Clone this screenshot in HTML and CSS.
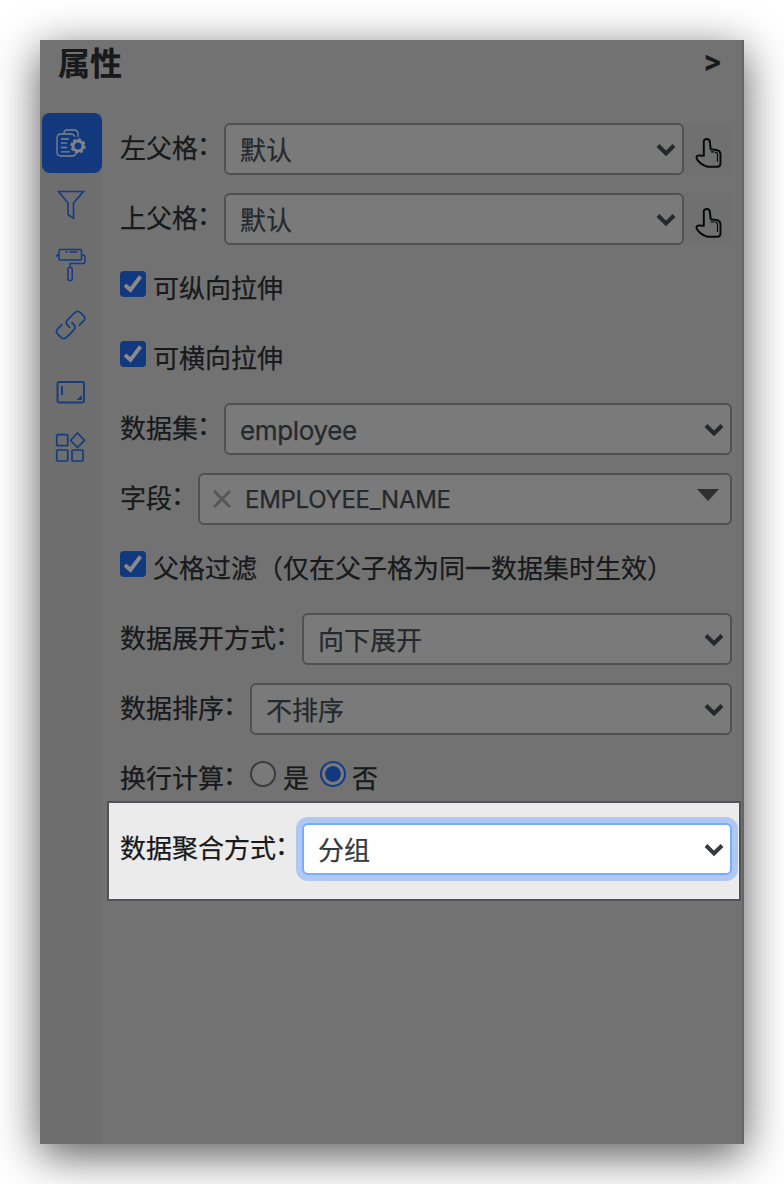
FILE: index.html
```
<!DOCTYPE html>
<html lang="zh-CN">
<head>
<meta charset="utf-8">
<title>属性</title>
<link rel="stylesheet" href="styles.css">
</head>
<body>
<svg class="defs" width="0" height="0">
  <symbol id="chevron" viewBox="0 0 20 14"><path d="M2 2.5l8 8 8-8" fill="none" stroke="currentColor" stroke-width="4"/></symbol>
  <symbol id="hand" viewBox="0 0 28 32"><g fill="none" stroke="currentColor" stroke-linejoin="round" stroke-linecap="round"><path stroke-width="2" d="M8.8 18V4.5C8.8 1 14.6 1 14.8 4.5L15.7 12.2L21.5 13C24 13.4 25.500 15 25.500 17.500V26C25.500 28.500 24.300 29.800 22.300 29.800H12.600C8 28.600 2.500 24.800 1.600 21.300C1.200 19.300 2.500 18.300 4.500 18.400L8.800 18.800"/><path stroke-width="1.2" d="M16 14.800h3M20.500 15.300c1.500 0 2 .6 2 2v7"/></g></symbol>
  <symbol id="check" viewBox="0 0 26 26"><path d="M5 14l5.500 5L20.500 5.500" fill="none" stroke="currentColor" stroke-width="3.800"/></symbol>
</svg>
<main class="panel">
  <header class="header"><h1 class="title">属性</h1><span class="collapse">&gt;</span></header>
  <div class="body">
    <nav class="tabs">
      <div class="tab active"><svg width="32" height="32" viewBox="0 0 32 32" fill="none" stroke="currentColor" stroke-width="1.3"><path d="M10 6.500C10 4 11 3 13 3h7c3 0 4 1 4 4v3M18.500 7H7C4 7 3 8.500 3 11v14c0 3 1.500 4 4 4h11c2 0 3.500-.8 4-2.500M18.500 7l2.500 2.500M7 12h8M7 16.200h6M7 20.500h6M7 24.800h9"/><circle cx="24" cy="19" r="5" stroke-width="3"/><circle cx="24" cy="19" r="6.800" stroke-width="1.800" stroke-dasharray="3 2.340"/></svg></div>
      <div class="tab filter"><svg width="32" height="32" viewBox="0 0 32 32" fill="none" stroke="currentColor" stroke-width="1.600"><path d="M3.500 2.500h25L18.500 14v15.300L13 25.500V14z"/></svg></div>
      <div class="tab"><svg width="32" height="36" viewBox="0 0 32 36" fill="none" stroke="currentColor" stroke-width="1.500"><rect x="4" y="2.500" width="22.500" height="10.500" rx="1"/><path d="M4 8H2.500Q1.500 8 1.500 10M26.500 8h1.500q2 0 2 2v4.500q0 2-2 2H15.200v4M10.500 5h2M14.500 5h8"/><rect x="13" y="20.500" width="4.200" height="13" rx="1.200"/></svg></div>
      <div class="tab link"><svg width="32" height="32" viewBox="0 0 32 32" fill="none" stroke="currentColor" stroke-width="1.700" stroke-linecap="round"><path d="M14.500 18.200l-2-2c-2-2-1.500-3.800 0-5.300l7-7c2-2 4.200-2 6.200 0l2.700 2.700c2 2 2 3.800 0 5.600l-4 4M17 13.800l1.500 1.500c2 2 2 4 .2 5.900l-7 7c-2 2-4.200 2-6 0l-3-3c-1.800-2-1.700-3.700.2-5.500l4-4"/></svg></div>
      <div class="tab frame"><svg width="32" height="28" viewBox="0 0 32 28" fill="none" stroke="currentColor" stroke-width="1.900"><rect x="2.500" y="4" width="26.500" height="20.500" rx="1.500"/><path d="M7 8v9"/><path d="M26.800 17v5h-5.300z" fill="currentColor" stroke="none"/></svg></div>
      <div class="tab blocks"><svg width="32" height="32" viewBox="0 0 32 32" fill="none" stroke="currentColor" stroke-width="1.700"><rect x="1.700" y="3.700" width="11" height="11" rx="1"/><rect x="1.700" y="19" width="11" height="11" rx="1"/><rect x="17" y="19" width="11" height="11" rx="1"/><path d="M22.500 2l7 7.300-7 7.200-7-7.200z" stroke-linejoin="round"/></svg></div>
    </nav>
    <section class="form">
      <div class="row"><label class="label">左父格<span class="colon">：</span></label><div class="select">默认<svg class="chevron"><use href="#chevron"/></svg></div><button class="pick"><svg width="28" height="32"><use href="#hand"/></svg></button></div>
      <div class="row"><label class="label">上父格<span class="colon">：</span></label><div class="select">默认<svg class="chevron"><use href="#chevron"/></svg></div><button class="pick"><svg width="28" height="32"><use href="#hand"/></svg></button></div>
      <div class="row"><span class="box"><svg width="26" height="26"><use href="#check"/></svg></span><span class="option">可纵向拉伸</span></div>
      <div class="row"><span class="box"><svg width="26" height="26"><use href="#check"/></svg></span><span class="option">可横向拉伸</span></div>
      <div class="row"><label class="label">数据集<span class="colon">：</span></label><div class="select latin">employee<svg class="chevron"><use href="#chevron"/></svg></div></div>
      <div class="row"><label class="label">字段<span class="colon">：</span></label><div class="select combo"><svg class="clear" width="18" height="18" viewBox="0 0 18 18"><path d="M1 1l16 16M17 1L1 17" stroke="currentColor" stroke-width="2.800"/></svg><span class="value">EMPLOYEE_NAME</span><svg class="caret" width="22" height="12" viewBox="0 0 22 12"><path d="M0 0h22L11 12z" fill="currentColor"/></svg></div></div>
      <div class="row"><span class="box"><svg width="26" height="26"><use href="#check"/></svg></span><span class="option">父格过滤（仅在父子格为同一数据集时生效）</span></div>
      <div class="row"><label class="label">数据展开方式<span class="colon">：</span></label><div class="select">向下展开<svg class="chevron"><use href="#chevron"/></svg></div></div>
      <div class="row"><label class="label">数据排序<span class="colon">：</span></label><div class="select">不排序<svg class="chevron"><use href="#chevron"/></svg></div></div>
      <div class="row"><label class="label">换行计算<span class="colon">：</span></label><span class="radio"></span><span class="option">是</span><span class="radio on"></span><span class="option">否</span></div>
      <div class="row spotlight"><label class="label">数据聚合方式<span class="colon">：</span></label><div class="select focus">分组<svg class="chevron"><use href="#chevron"/></svg></div></div>
    </section>
  </div>
</main>
</body>
</html>
```
FILE: styles.css
```
* { box-sizing: border-box; }
body { margin: 0; padding: 40px; height: 1184px; overflow: hidden; background: #fff; color: #17191b; font: 26px/38px Inter, "Noto Sans CJK SC", sans-serif; -webkit-text-stroke: 0.25px currentColor; }
svg { display: block; flex: none; }
.defs { position: absolute; }
.panel { width: 704px; height: 1104px; display: flex; flex-direction: column; background: #727272; border-right: 2px solid #656565; box-shadow: 0 11px 42px rgba(0,0,0,.66); }
.header { height: 73px; display: flex; justify-content: space-between; padding: 0 20px 0 18px; }
.title { margin: 0; font-size: 32px; line-height: 47px; font-weight: 700; }
.collapse { font-size: 28px; line-height: 42px; font-weight: 700; }
.body { flex: 1; display: flex; }
.tabs { width: 62px; padding-left: 2px; background: #6e6e6e; color: #153b82; }
.tab { width: 60px; height: 61px; display: flex; align-items: center; justify-content: center; padding-right: 2px; }
.tab.active { height: 60px; padding-right: 4px; border-radius: 8px; background: #12387d; color: #808489; }
.tab.filter { padding-top: 2px; }
.tab.link { padding-bottom: 2px; }
.tab.frame { height: 70px; padding-top: 1px; }
.tab.blocks { height: 42px; }
.form { flex: 1; min-width: 0; padding: 10px 10px 0 18px; display: flex; flex-direction: column; gap: 18px; }
.row { height: 52px; display: flex; flex: none; }
.label { padding-top: 1px; line-height: 50px; white-space: nowrap; flex: none; }
.colon { position: relative; top: -3px; left: -1px; }
.select { position: relative; flex: 1; height: 52px; padding: 1px 0 0 14px; border: 2px solid #515151; border-radius: 6px; background: #7a7a7a; color: #25292d; line-height: 50px; }
.latin { letter-spacing: -0.35px; }
.chevron { position: absolute; right: 6px; top: 18px; width: 20px; height: 14px; }
.pick { width: 46px; margin-right: 2px; padding: 7px 0 0 11px; border: 0; background: #707070; color: #090a0b; }
.combo { display: flex; align-items: center; padding: 0 0 0 13px; gap: 14px; font-size: 24px; line-height: 48px; letter-spacing: -0.3px; }
.value { padding-top: 2px; }
.clear { color: #565656; }
.caret { position: absolute; right: 11px; top: 14px; color: #303030; }
.box { width: 26px; height: 26px; margin: 8px 7px 0 0; border-radius: 4px; background: #12387d; color: #8a8a8a; }
.option { padding-top: 1px; line-height: 50px; white-space: nowrap; }
.radio { width: 26px; height: 26px; margin: 8px 7px 0 0; border: 2px solid #3b3b3b; border-radius: 50%; background: #797979; }
.option + .radio { margin-left: 11px; margin-right: 6px; }
.radio.on { padding: 3px; border-color: #153c86; background: #12387d content-box; box-shadow: inset 0 0 0 3px #797979; }
.spotlight { height: 100px; margin: -22px -9px 0 -13px; padding: 20px 7px 0 11px; border: 2px solid #52545d; background: #ebebeb; }
.focus { border-color: #77adff; background: #fff; color: #353b41; box-shadow: 0 0 0 6px #b0c8f3; }
```
